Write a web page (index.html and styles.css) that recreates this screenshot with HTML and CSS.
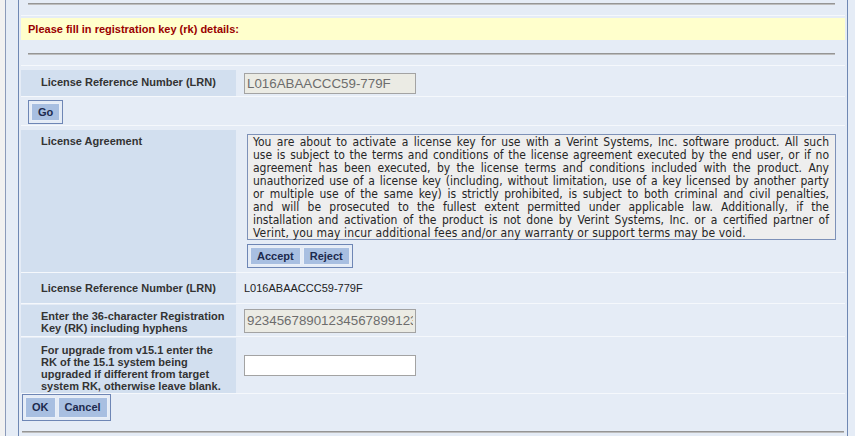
FILE: index.html
```html
<!DOCTYPE html>
<html lang="en">
<head>
<meta charset="utf-8">
<title>Registration key</title>
<link rel="stylesheet" href="styles.css">
</head>
<body>
<div class="shell">
  <div class="edge"></div>
  <div class="gutter"></div>
  <main class="panel">
    <div class="row row-rule"><hr class="rule rule-top"></div>
    <div class="row row-notice">
      <div class="notice">Please fill in registration key (rk) details:</div>
      <hr class="rule rule-top">
    </div>
    <div class="row field f-lrn">
      <div class="label">License Reference Number (LRN)</div>
      <div class="value"><input class="input input-locked" type="text" value="L016ABAACCC59-779F" readonly></div>
    </div>
    <div class="row row-go">
      <div class="btn-group"><button class="btn" type="button">Go</button></div>
    </div>
    <div class="row field f-agree">
      <div class="label label-top">License Agreement</div>
      <div class="value value-stack">
        <div class="agreement">
          <span class="ln">You are about to activate a license key for use with a Verint Systems, Inc. software product. All such</span>
          <span class="ln">use is subject to the terms and conditions of the license agreement executed by the end user, or if no</span>
          <span class="ln">agreement has been executed, by the license terms and conditions included with the product. Any</span>
          <span class="ln">unauthorized use of a license key (including, without limitation, use of a key licensed by another party</span>
          <span class="ln">or multiple use of the same key) is strictly prohibited, is subject to both criminal and civil penalties,</span>
          <span class="ln">and will be prosecuted to the fullest extent permitted under applicable law. Additionally, if the</span>
          <span class="ln">installation and activation of the product is not done by Verint Systems, Inc. or a certified partner of</span>
          <span class="ln ln-last">Verint, you may incur additional fees and/or any warranty or support terms may be void.</span>
        </div>
        <div class="btn-group btn-group-agree"><button class="btn" type="button">Accept</button><button class="btn" type="button">Reject</button></div>
      </div>
    </div>
    <div class="row field f-lrn2">
      <div class="label">License Reference Number (LRN)</div>
      <div class="value plain">L016ABAACCC59-779F</div>
    </div>
    <div class="row field f-rk">
      <div class="label">Enter the 36-character Registration Key (RK) including hyphens</div>
      <div class="value"><input class="input input-locked" type="text" value="923456789012345678991234567890123456" readonly></div>
    </div>
    <div class="row field f-up">
      <div class="label">For upgrade from v15.1 enter the RK of the 15.1 system being upgraded if different from target system RK, otherwise leave blank.</div>
      <div class="value"><input class="input" type="text" value=""></div>
    </div>
    <div class="row row-ok">
      <div class="btn-group big"><button class="btn" type="button">OK</button><button class="btn" type="button">Cancel</button></div>
      <hr class="rule rule-bottom">
    </div>
  </main>
</div>
</body>
</html>
```
FILE: styles.css
```css
* { box-sizing: border-box; }
html, body { margin: 0; padding: 0; }
body {
  background: #e5ecf6;
  font-family: "Liberation Sans", Arial, sans-serif;
  font-size: 11px;
  color: #333;
  width: 855px;
  height: 436px;
  overflow: hidden;
}
.shell { display: flex; height: 436px; }
.edge { width: 6px; flex: none; background: #f1f1f1; border-right: 1px solid #8a9aba; }
.gutter { width: 12px; flex: none; }
.panel {
  width: 830px;
  flex: none;
  border-left: 1px solid #6f88b3;
  border-right: 1px solid #6f88b3;
}
.row { margin: 0 2px; border-bottom: 1px solid #f5f8fc; }
.rule {
  border: 0;
  border-top: 1px solid #959595;
  border-bottom: 1px solid #bdbdbd;
  height: 0;
  margin: 0;
}
.rule-top { margin-left: 7px; margin-right: 10px; }
.row-rule { height: 16px; padding-top: 3px; }
.row-notice { padding: 2px 0 10px; }
.row-notice .rule { margin-top: 13px; }
.notice {
  background: #ffffcc;
  height: 22px;
  line-height: 22px;
  padding-left: 7px;
  font-weight: bold;
  color: #990000;
}
.field { display: grid; grid-template-columns: 215px 1fr; }
.label {
  background: #d2dfef;
  font-weight: bold;
  line-height: 12px;
  padding: 0 5px 0 20px;
  display: flex;
  align-items: center;
}
.value { display: flex; align-items: center; padding-left: 8px; }
.f-lrn { padding-top: 4px; }
.f-lrn .label { height: 26px; padding-bottom: 2px; }
.row-go { height: 29px; padding: 3px 0 0 7px; }
.f-agree { padding-top: 4px; }
.f-agree .label { height: 142px; }
.label-top { align-items: flex-start; padding-top: 5px; }
.value-stack {
  flex-direction: column;
  align-items: flex-start;
  padding-top: 4px;
  padding-left: 11px;
}
.agreement {
  width: 589px;
  height: 106px;
  border: 1px solid #7d91b8;
  background: #eeeeee;
  padding: 1px 6px 0 5px;
  font-family: "DejaVu Sans Condensed", "DejaVu Sans", sans-serif;
  font-size: 12px;
  line-height: 13px;
  color: #262626;
}
.ln { display: block; text-align: justify; text-align-last: justify; }
.ln-last { text-align-last: left; letter-spacing: 0.15px; }
.btn-group-agree { margin-top: 4px; }
.f-lrn2 .label { height: 30px; }
.plain { color: #222; }
.f-rk { padding-top: 1px; }
.f-rk .label { height: 31px; padding-top: 2px; }
.f-up { padding-top: 1px; }
.f-up .label { height: 55px; padding-top: 5px; }
.row-ok { border-bottom: 0; padding-left: 1px; }
.rule-bottom { margin: 10px 1px 0 0; }
.input {
  width: 172px;
  height: 21px;
  border: 1px solid #a3a3a3;
  padding: 0 2px;
  margin: 0;
  font-family: "Liberation Sans", Arial, sans-serif;
  font-size: 13.33px;
  background: #ffffff;
  color: #000;
  outline: none;
}
.f-rk .input { height: 24px; }
.input-locked { background: #ebebe4; color: #6d6d6d; }
.btn-group {
  display: inline-flex;
  gap: 2px;
  border: 1px solid #6e86b5;
  padding: 2px;
}
.btn {
  appearance: none;
  font: bold 11px "Liberation Sans", Arial, sans-serif;
  color: #1c2a4e;
  background: #a8bfe1;
  border: 1px solid #e9eff8;
  border-radius: 0;
  height: 18px;
  padding: 0 6px;
  margin: 0;
  line-height: 16px;
}
.big .btn { height: 21px; padding: 0 6px; line-height: 19px; }
```
